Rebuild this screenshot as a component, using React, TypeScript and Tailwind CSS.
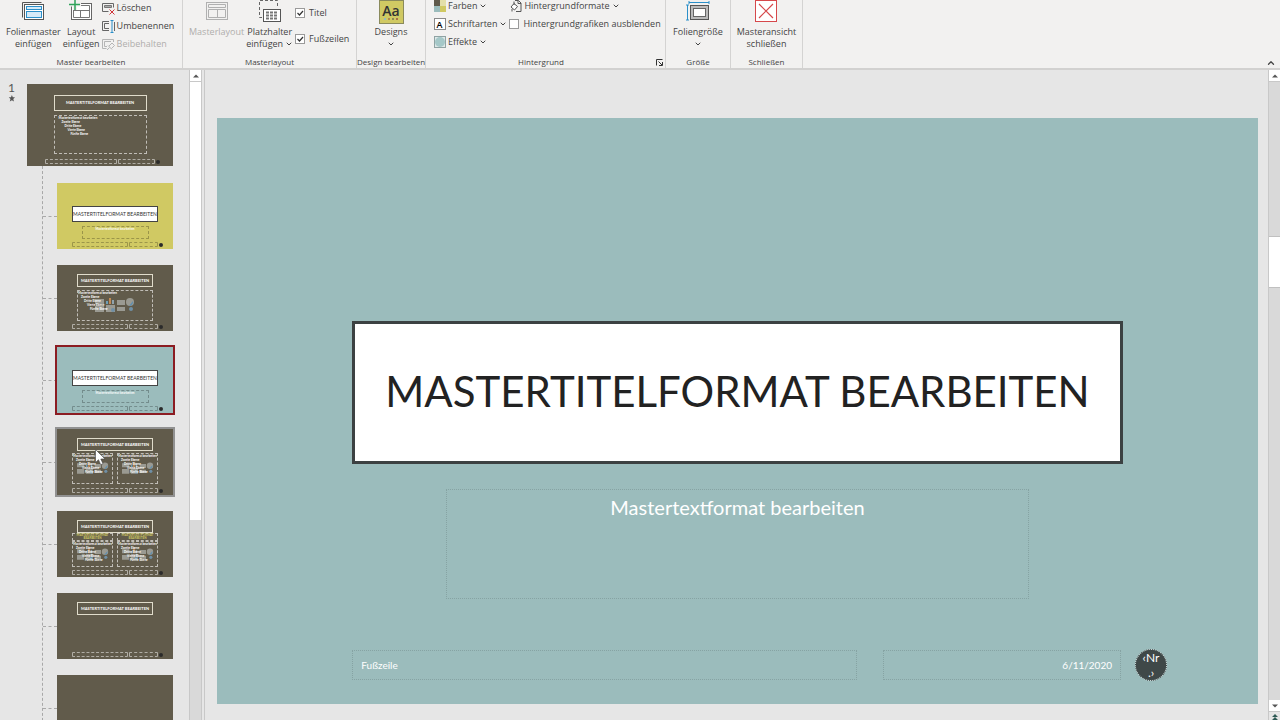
import { type ReactNode } from 'react';

import clsx from 'clsx';
import { ChevronDown, ChevronUp } from 'lucide-react';

const TITLE = 'Mastertitelformat bearbeiten';
const BODY = 'Mastertextformat bearbeiten';
const LEVELS = ['Zweite Ebene', 'Dritte Ebene', 'Vierte Ebene', 'Fünfte Ebene'];

function Caret() {
  return <ChevronDown className="h-2 w-2 shrink-0" strokeWidth={3} />;
}

/* ---------- ribbon icons ---------- */

function SlideMasterIcon() {
  return (
    <svg width="24" height="22" viewBox="0 0 24 22" fill="none">
      <path d="M1.5 17.5V2.5H20.5" stroke="#555" />
      <rect x="3.5" y="4.500" width="19" height="15" fill="#fff" stroke="#555" />
      <rect x="5.5" y="6.500" width="15" height="3" fill="#d6eaf8" stroke="#2b8fc9" />
      <rect x="5.5" y="11.500" width="15" height="6" fill="#d6eaf8" stroke="#2b8fc9" />
    </svg>
  );
}

function LayoutIcon() {
  return (
    <svg width="24" height="22" viewBox="0 0 24 22" fill="none">
      <rect x="2.500" y="3.500" width="20" height="16" fill="#fff" stroke="#666" />
      <path d="M4.500 5.500h16v12h-16zM4.500 10.500h16M11.500 10.500v7" stroke="#777" />
      <path d="M6 0v10M0 4.500h12" stroke="#f2f1f0" strokeWidth="4" />
      <path d="M6 0v10M0 4.500h11" stroke="#2fa35a" strokeWidth="1.500" />
    </svg>
  );
}

function DeleteIcon() {
  return (
    <svg width="13" height="13" viewBox="0 0 13 13" fill="none">
      <path d="M.5 1.500h11v4M.5 1.500v8h6" stroke="#666" />
      <path d="M2.500 3.500h7v2h-7z" fill="#aaa" stroke="#777" />
      <path d="m7.500 7.500 5 5m0-5-5 5" stroke="#d13438" />
    </svg>
  );
}

function RenameIcon() {
  return (
    <svg width="13" height="13" viewBox="0 0 13 13" fill="none">
      <path d="M7 1.500H.5v9H7M7 3.500H2.500v5H7" stroke="#666" />
      <path d="M8.500.5H10v12H8.500M11.500.5H10m0 12h1.500" stroke="#2b8fc9" />
      <path d="M12.500 2v9" stroke="#666" />
    </svg>
  );
}

function PreserveIcon() {
  return (
    <svg width="13" height="13" viewBox="0 0 13 13" fill="none" stroke="#b5b5b5">
      <path d="M11.500 4V1.500H.5v9h4M9 3.500H2.500v5H5" />
      <path d="m5 12 2.500-2.500M6 7.500l4 4M7 8l3-3 2.500 2.500-3 3" />
    </svg>
  );
}

function MasterLayoutIcon() {
  return (
    <svg width="24" height="22" viewBox="0 0 24 22" fill="none" stroke="#b0b0b0">
      <rect x="1.500" y="2.500" width="21" height="17" />
      <path d="M3.500 4.500h17v3h-17zM3.500 9.500h17v8h-17zM12.500 9.500v8" />
    </svg>
  );
}

function PlaceholderIcon() {
  return (
    <svg width="24" height="22" viewBox="0 0 24 22" fill="none">
      <path d="M4 17.500H1.500V.5h18V8" stroke="#666" strokeDasharray="3 2" />
      <rect x="5.500" y="9.500" width="17" height="12" fill="#fff" stroke="#555" />
      <path
        d="M8 12.500h3m1 0h3m1 0h3M8 15.500h3m1 0h3m1 0h3M8 18.500h3m1 0h3m1 0h3"
        stroke="#777"
        strokeWidth="2"
      />
    </svg>
  );
}

function DesignsIcon() {
  return (
    <span className="flex h-[24px] w-[25px] flex-col items-center justify-between border border-[#8a8a5c] bg-[#d0c963] pt-0.5 pb-1">
      <span className="text-[14px] leading-[15px] font-semibold text-[#333]">Aa</span>
      <span className="flex gap-0.5">
        <span className="h-0.5 w-0.5 bg-[#9bbcbc]" />
        <span className="h-0.5 w-0.5 bg-[#b58a4a]" />
        <span className="h-0.5 w-0.5 bg-[#8d8a55]" />
        <span className="h-0.5 w-0.5 bg-[#a86f4a]" />
      </span>
    </span>
  );
}

function ColorsIcon() {
  return (
    <svg width="12" height="12" viewBox="0 0 12 12">
      <path d="M0 0h6v6H0z" fill="#5f594a" />
      <path d="M6 0h6v6H6z" fill="#e3dfa9" />
      <path d="M0 6h6v6H0z" fill="#9bbcbc" />
      <path d="M6 6h6v6H6z" fill="#d0c963" />
    </svg>
  );
}

function FontsIcon() {
  return (
    <span className="flex h-3 w-3 items-center justify-center border border-[#8a8a8a] bg-white text-[9px] leading-none font-semibold text-black">
      A
    </span>
  );
}

function EffectsIcon() {
  return (
    <svg width="12" height="12" viewBox="0 0 12 12">
      <rect x=".5" y=".5" width="11" height="11" fill="#dfe8e8" stroke="#8fa3a3" />
      <circle cx="6" cy="6" r="5" fill="#a5c8c8" />
    </svg>
  );
}

function BackgroundIcon() {
  return (
    <svg width="12" height="12" viewBox="0 0 12 12" fill="none" stroke="#555">
      <path d="M5 .5h3.500l2.500 2.500v8.500H6M8 .5V3.500h3" />
      <path d="m4 3.500 3.500 3-3 3.500L1 7z" fill="#fff" />
      <path d="M4 5V1.500M2 9v2.500" />
    </svg>
  );
}

function SlideSizeIcon() {
  return (
    <svg width="24" height="22" viewBox="0 0 24 22" fill="none">
      <path d="M3 2.500h20M3 1v3M23 1v3M1.500 5v15M0 5h3M0 20h3" stroke="#2b8fc9" />
      <rect x="4.500" y="5.500" width="18" height="14" fill="#bbb" stroke="#555" />
      <rect x="7.500" y="8.500" width="12" height="8" fill="#fff" stroke="#666" />
    </svg>
  );
}

function CloseMasterIcon() {
  return (
    <svg width="22" height="22" viewBox="0 0 22 22" fill="none" stroke="#d6484b">
      <rect x=".5" y=".5" width="21" height="21" fill="#fff" />
      <path d="m4 4 14 14m0-14L4 18" strokeWidth="1.200" />
    </svg>
  );
}

function LauncherIcon() {
  return (
    <svg width="7" height="7" viewBox="0 0 7 7" fill="none" stroke="#333">
      <path d="M.5 6.500V.5h6" />
      <path d="m2.500 2.500 3.500 3.500M6.500 3v3.500H3" />
    </svg>
  );
}

/* ---------- ribbon parts ---------- */

function Group({
  label,
  width,
  launcher,
  children,
}: {
  label: string;
  width: string;
  launcher?: boolean;
  children: ReactNode;
}) {
  return (
    <section
      className={clsx(
        'flex h-[68px] shrink-0 flex-col justify-between border-r border-[#d4d3d2]',
        width,
      )}
    >
      <div className="flex h-14">{children}</div>
      <div className="flex h-3 items-center text-[8px] leading-3">
        <h2 className="flex-1 text-center whitespace-nowrap">{label}</h2>
        {launcher ? (
          <button type="button" aria-label="Hintergrund formatieren" className="pr-0.5">
            <LauncherIcon />
          </button>
        ) : null}
      </div>
    </section>
  );
}

function BigButton({
  icon,
  lines,
  menu,
  disabled,
}: {
  icon: ReactNode;
  lines: string[];
  menu?: boolean;
  disabled?: boolean;
}) {
  return (
    <button
      type="button"
      disabled={disabled}
      className="flex flex-col items-center leading-3 whitespace-nowrap disabled:text-[#b0aeac]"
    >
      <span className="flex h-[26px] items-start justify-center">{icon}</span>
      <span>{lines[0]}</span>
      <span className="flex h-3 items-center gap-0.5">
        {lines[1]}
        {menu ? <Caret /> : null}
      </span>
    </button>
  );
}

function SmallButton({
  icon,
  label,
  menu,
  disabled,
}: {
  icon: ReactNode;
  label: string;
  menu?: boolean;
  disabled?: boolean;
}) {
  return (
    <button
      type="button"
      disabled={disabled}
      className="flex h-3 items-center gap-0.5 leading-3 whitespace-nowrap disabled:text-[#b0aeac]"
    >
      <span className="flex w-[13px] justify-center">{icon}</span>
      {label}
      {menu ? <Caret /> : null}
    </button>
  );
}

function CheckOption({ label, checked }: { label: string; checked?: boolean }) {
  return (
    <label className="flex items-center gap-1 leading-3 whitespace-nowrap">
      <span className="grid">
        <input
          type="checkbox"
          defaultChecked={checked}
          className="peer col-start-1 row-start-1 h-2.5 w-2.5 appearance-none border border-[#9a9a9a] bg-white"
        />
        <svg
          viewBox="0 0 10 10"
          fill="none"
          stroke="#333"
          strokeWidth="1.200"
          className="pointer-events-none invisible col-start-1 row-start-1 h-2.5 w-2.5 peer-checked:visible"
        >
          <path d="m2.500 5 2 2L8 3" />
        </svg>
      </span>
      {label}
    </label>
  );
}

function Ribbon() {
  return (
    <header className="flex h-[70px] shrink-0 items-start overflow-hidden border-b-2 border-[#d2d1d0] bg-[#f2f1f0] text-[9px] text-[#444]">
      <Group label="Master bearbeiten" width="w-[183px]">
        <div className="flex gap-0.5 pl-1.5">
          <BigButton icon={<SlideMasterIcon />} lines={['Folienmaster', 'einfügen']} />
          <BigButton icon={<LayoutIcon />} lines={['Layout', 'einfügen']} />
          <div className="flex flex-col items-start gap-1.5 pt-0.5">
            <SmallButton icon={<DeleteIcon />} label="Löschen" />
            <SmallButton icon={<RenameIcon />} label="Umbenennen" />
            <SmallButton icon={<PreserveIcon />} label="Beibehalten" disabled />
          </div>
        </div>
      </Group>
      <Group label="Masterlayout" width="w-[174px]">
        <div className="flex gap-0.5 pl-1.5">
          <BigButton icon={<MasterLayoutIcon />} lines={['Masterlayout']} disabled />
          <BigButton icon={<PlaceholderIcon />} lines={['Platzhalter', 'einfügen']} menu />
          <div className="flex flex-col">
            <div className="flex h-[26px] items-center">
              <CheckOption label="Titel" checked />
            </div>
            <div className="flex h-[26px] items-center">
              <CheckOption label="Fußzeilen" checked />
            </div>
          </div>
        </div>
      </Group>
      <Group label="Design bearbeiten" width="w-[69px]">
        <div className="flex flex-1 justify-center">
          <BigButton icon={<DesignsIcon />} lines={['Designs']} menu />
        </div>
      </Group>
      <Group label="Hintergrund" width="w-[240px]" launcher>
        <div className="flex gap-0.5 pl-[7px]">
          <div className="flex flex-col items-start gap-1.5">
            <SmallButton icon={<ColorsIcon />} label="Farben" menu />
            <SmallButton icon={<FontsIcon />} label="Schriftarten" menu />
            <SmallButton icon={<EffectsIcon />} label="Effekte" menu />
          </div>
          <div className="flex flex-col items-start gap-1.5">
            <SmallButton icon={<BackgroundIcon />} label="Hintergrundformate" menu />
            <CheckOption label="Hintergrundgrafiken ausblenden" />
          </div>
        </div>
      </Group>
      <Group label="Größe" width="w-[65px]">
        <div className="flex flex-1 justify-center">
          <BigButton icon={<SlideSizeIcon />} lines={['Foliengröße']} menu />
        </div>
      </Group>
      <Group label="Schließen" width="w-[72px]">
        <div className="flex flex-1 justify-center">
          <BigButton icon={<CloseMasterIcon />} lines={['Masteransicht', 'schließen']} />
        </div>
      </Group>
      <button type="button" aria-label="Menüband reduzieren" className="mt-auto ml-auto pr-1">
        <ChevronUp className="h-2.5 w-2.5" strokeWidth={3} />
      </button>
    </header>
  );
}

/* ---------- thumbnails ---------- */

function ThumbFooter({ light, width }: { light?: boolean; width: string }) {
  const box = clsx(
    'h-full rounded-[1px] border border-dashed',
    light ? 'border-black/25' : 'border-white/50',
  );
  return (
    <span className={clsx('flex h-[5px] items-center gap-px self-start', width)}>
      <span className={clsx(box, 'flex-[2]')} />
      <span className={clsx(box, 'flex-1')} />
      <span className="h-1 w-1 rounded-full bg-[#2b2b2b]" />
    </span>
  );
}

function ThumbLevels() {
  return (
    <ul className="text-left font-bold text-white">
      <li>{BODY}</li>
      {LEVELS.map((level, i) => (
        <li key={level} style={{ paddingLeft: 3 + i * 3 }}>
          {level}
        </li>
      ))}
    </ul>
  );
}

function MediaIcons({ small }: { small?: boolean }) {
  return (
    <svg
      viewBox="0 0 40 15"
      className={clsx('shrink-0', small ? 'h-[13px] w-8' : 'h-[15px] w-10')}
    >
      <g fill="#a9aaa4" fillOpacity=".8">
        <path d="M0 1h9v5H0zM22 2h8v5h-8zM0 8h9v6H0zM11 7h9v7h-9zM22 9h8v4h-8z" />
        <circle cx="35" cy="4" r="4" />
      </g>
      <path d="M11 3h2v3h-2z" fill="#6f9fb5" />
      <path d="M14 0h2v6h-2z" fill="#c08a55" />
      <path d="M17 2h2v4h-2z" fill="#8fa3ad" />
      <path d="M38 3a4 4 0 0 1-4 5z" fill="#5f8fb0" />
      <circle cx="36" cy="11" r="2" fill="#6f8fa5" />
      <circle cx="18" cy="12" r="2" fill="#6f8fa5" />
    </svg>
  );
}

function ContentBox({ small, className }: { small?: boolean; className?: string }) {
  return (
    <div
      className={clsx(
        'grid overflow-hidden border border-dashed border-white/60 text-[3px] leading-[4px] whitespace-nowrap',
        className,
      )}
    >
      <div className="col-start-1 row-start-1 place-self-center">
        <MediaIcons small={small} />
      </div>
      <div className="col-start-1 row-start-1">
        <ThumbLevels />
      </div>
    </div>
  );
}

function TitleThumb({ color, selected }: { color: string; selected?: boolean }) {
  return (
    <button
      type="button"
      aria-current={selected}
      className={clsx(
        'flex h-[66px] w-[116px] flex-col items-center justify-between px-[15px] pt-[23px] pb-0.5',
        color,
        selected && 'outline-2 outline-[#8c1c22]',
      )}
    >
      <span className="flex h-4 w-[86px] items-center justify-center border border-[#444] bg-white text-[5px] leading-none whitespace-nowrap text-[#333] uppercase">
        {TITLE}
      </span>
      <span className="h-[13px] w-[67px] border border-dashed border-black/25 text-[3px] leading-[4px] font-bold text-white">
        {BODY}
      </span>
      <ThumbFooter light width="w-[91px]" />
    </button>
  );
}

function DarkThumb({
  hovered,
  blank,
  children,
}: {
  hovered?: boolean;
  blank?: boolean;
  children?: ReactNode;
}) {
  return (
    <button
      type="button"
      aria-label="Layout"
      className={clsx(
        'flex h-[66px] w-[116px] flex-col items-center justify-between bg-[#615b4b] px-[15px] pt-[9px] pb-0.5',
        hovered && 'outline-2 outline-[#919191]',
      )}
    >
      <span className="flex w-full flex-col items-center">
        {blank ? null : (
          <span className="flex h-[13px] w-[76px] items-center justify-center border border-[#e0dccb] text-[4px] leading-none font-bold whitespace-nowrap text-white uppercase">
            {TITLE}
          </span>
        )}
        {children}
      </span>
      <ThumbFooter width="w-[91px]" />
    </button>
  );
}

function MasterThumb() {
  return (
    <button
      type="button"
      className="flex h-[82px] w-[146px] flex-col items-center justify-between bg-[#615b4b] px-[18px] pt-[11px] pb-0.5"
    >
      <span className="flex flex-col gap-1">
        <span className="flex h-4 w-[93px] items-center justify-center border border-[#e0dccb] text-[4px] leading-none font-bold whitespace-nowrap text-white uppercase">
          {TITLE}
        </span>
        <span className="h-[39px] w-[93px] border border-dashed border-white/60 px-1 text-[3px] leading-[4px]">
          <ThumbLevels />
        </span>
      </span>
      <ThumbFooter width="w-[115px]" />
    </button>
  );
}

const COMPARE_HEADER =
  'flex h-2 flex-1 items-center justify-center border border-dashed border-white/60 text-center text-[3px] leading-[3px] font-bold text-[#d0c963] uppercase';

function ThumbItem({ children }: { children: ReactNode }) {
  return (
    <li className="flex items-center">
      <span className="w-3.5 border-t border-dashed border-[#a8a8a8]" />
      {children}
    </li>
  );
}

function ThumbnailPanel() {
  return (
    <aside className="flex w-[205px] shrink-0 border-r border-[#c8c8c8]">
      <div className="min-w-0 flex-1 overflow-hidden pt-3.5">
        <div className="flex">
          <div className="flex w-[27px] flex-col items-center pr-1 text-[#555]">
            <span className="text-[12px] leading-[8px]">1</span>
            <svg width="7" height="7" viewBox="0 0 9 9" className="mt-[3px]">
              <path
                d="m5 0 1.200 3H9L6.800 5l.9 3.500L5 6.700 2.300 8.500 3.200 5 1 3h2.800z"
                fill="#555"
              />
            </svg>
          </div>
          <MasterThumb />
        </div>
        <ul className="ml-[42px] flex flex-col gap-4 border-l border-dashed border-[#a8a8a8] pt-[17px]">
          <ThumbItem>
            <TitleThumb color="bg-[#d0c963]" />
          </ThumbItem>
          <ThumbItem>
            <DarkThumb>
              <ContentBox className="mt-[3px] h-[31px] w-[76px]" />
            </DarkThumb>
          </ThumbItem>
          <ThumbItem>
            <TitleThumb color="bg-[#9bbcbc]" selected />
          </ThumbItem>
          <ThumbItem>
            <DarkThumb hovered>
              <span className="mt-0.5 flex w-full gap-1">
                <ContentBox small className="h-[31px] flex-1" />
                <ContentBox small className="h-[31px] flex-1" />
              </span>
            </DarkThumb>
          </ThumbItem>
          <ThumbItem>
            <DarkThumb>
              <span className="flex w-full gap-1">
                <span className={COMPARE_HEADER}>{BODY}</span>
                <span className={COMPARE_HEADER}>{BODY}</span>
              </span>
              <span className="flex w-full gap-1">
                <ContentBox small className="h-[26px] flex-1" />
                <ContentBox small className="h-[26px] flex-1" />
              </span>
            </DarkThumb>
          </ThumbItem>
          <ThumbItem>
            <DarkThumb />
          </ThumbItem>
          <ThumbItem>
            <DarkThumb blank />
          </ThumbItem>
        </ul>
      </div>
      <div className="mr-0.5 flex w-[13px] flex-col border-x border-[#c8c8c8] bg-[#d9d9d9]">
        <ScrollArrow />
        <span className="h-[438px] bg-white" />
      </div>
    </aside>
  );
}

function ScrollArrow({ down }: { down?: boolean }) {
  return (
    <button
      type="button"
      aria-label={down ? 'Nach unten' : 'Nach oben'}
      className="flex h-3 shrink-0 items-center justify-center border-b border-[#c8c8c8] bg-white"
    >
      <svg
        viewBox="0 0 6 6"
        fill="#555"
        className={clsx('h-1.5 w-1.5', down && 'rotate-180')}
      >
        <path d="M0 4.500 3 1.500l3 3z" />
      </svg>
    </button>
  );
}

/* ---------- slide ---------- */

const PLACEHOLDER = 'border border-dotted border-[#86a3a3]';

function Slide() {
  return (
    <article className="flex aspect-video w-full flex-col items-center bg-[#9bbcbc] pt-[203px] text-white">
      <h1 className="flex h-[143px] w-[74%] shrink-0 items-center justify-center border-3 border-[#3c4142] bg-white pb-1 text-[42px] leading-none whitespace-nowrap text-[#222] uppercase">
        {TITLE}
      </h1>
      <p
        className={clsx(
          PLACEHOLDER,
          'mt-[25px] h-[110px] w-[56%] shrink-0 pt-[5px] text-center text-[20px] leading-6',
        )}
      >
        {BODY}
      </p>
      <footer className="mt-[50px] flex w-full items-center pr-[91px] pl-[13%] text-[10px] leading-7">
        <div className={clsx(PLACEHOLDER, 'mr-[26px] h-[30px] flex-[487] px-2')}>
          Fußzeile
        </div>
        <div className={clsx(PLACEHOLDER, 'h-[30px] flex-[220] px-2 text-right')}>
          6/11/2020
        </div>
        <div className="ml-3.5 flex h-8 w-8 flex-col items-center rounded-full border border-dotted border-[#d5e2e2] bg-[#3f4848] text-[12px] leading-[15px]">
          <span>‹Nr</span>
          <span>.›</span>
        </div>
      </footer>
    </article>
  );
}

function Pointer() {
  return (
    <svg
      width="11"
      height="17"
      viewBox="0 0 11 17"
      className="pointer-events-none absolute top-[449px] left-[95px]"
    >
      <path
        d="M.5.500v13l3-2.800 2.200 5 2.300-1-2.200-4.700h4.200z"
        fill="#fff"
        stroke="#444"
        strokeWidth=".6"
      />
    </svg>
  );
}

export default function App() {
  return (
    <div className="relative flex h-screen flex-col overflow-hidden bg-[#e6e6e6] font-['Open_Sans','Noto_Sans',sans-serif]">
      <Ribbon />
      <div className="flex min-h-0 flex-1 font-[Lato,'Open_Sans',sans-serif]">
        <ThumbnailPanel />
        <main className="min-w-0 flex-1 overflow-hidden pt-12 pr-2.5 pl-3">
          <Slide />
        </main>
        <div className="flex w-3 shrink-0 flex-col border-l border-[#c8c8c8] bg-[#d9d9d9]">
          <ScrollArrow />
          <span className="flex-[154]" />
          <span className="h-[52px] border-y border-[#c0c0c0] bg-white" />
          <span className="flex-[412]" />
          <ScrollArrow down />
          <button
            type="button"
            aria-label="Vorherige Folie"
            className="flex h-2 items-end justify-center bg-[#e6e6e6]"
          >
            <svg viewBox="0 0 6 6" fill="#2f5a55" className="h-1.5 w-1.5">
              <path d="M0 3 3 0l3 3zM0 6l3-3 3 3z" />
            </svg>
          </button>
        </div>
      </div>
      <Pointer />
    </div>
  );
}
